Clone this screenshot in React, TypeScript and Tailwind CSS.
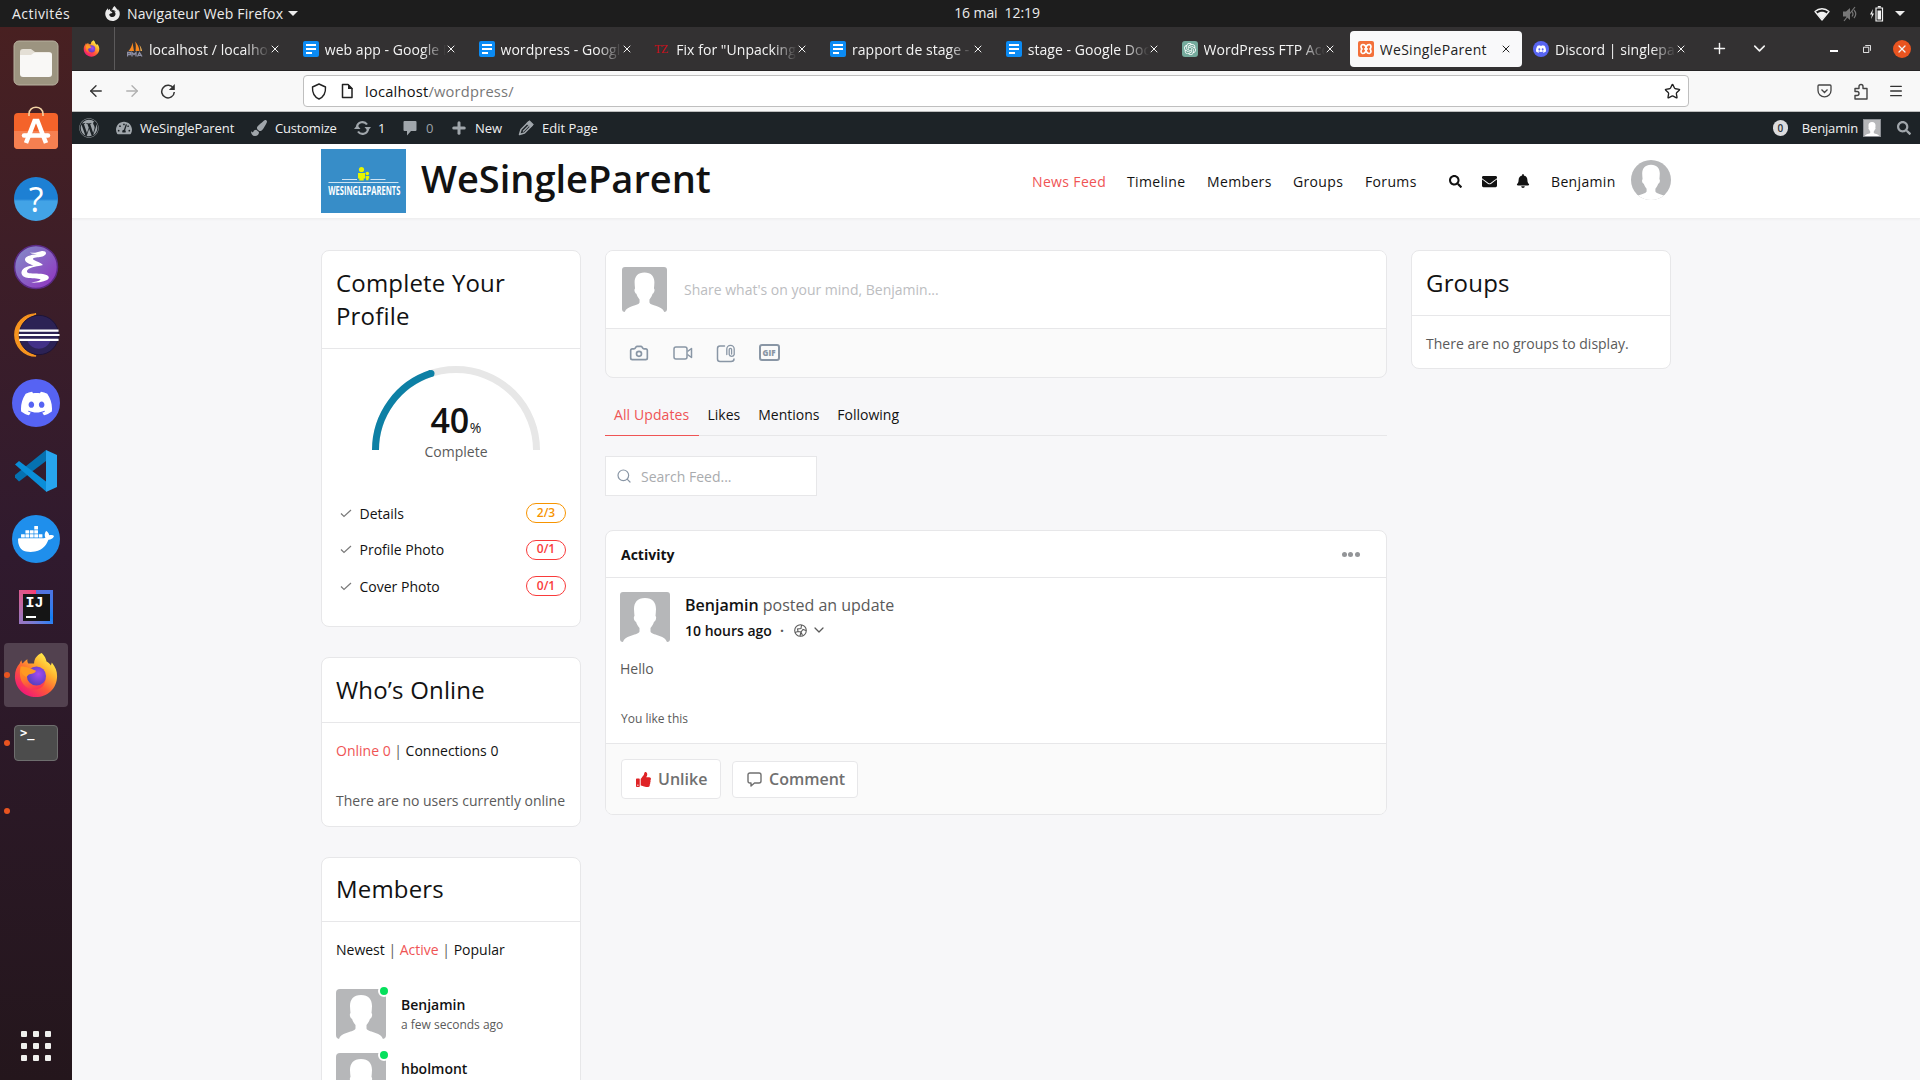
import React from "react";
import { ArrowLeft, ArrowRight, Camera, ChevronDown, Menu, Plus, Search, Star, X } from "lucide-react";
import { FaBell, FaEnvelope, FaPaintBrush, FaSearch, FaTachometerAlt, FaThumbsUp, FaWordpress } from "react-icons/fa";
import { SiDiscord, SiDocker, SiFirefoxbrowser, SiOpenai } from "react-icons/si";

function Avatar({ className }: { className: string }) {
  return (
    <svg viewBox="0 0 50 50" className={className}>
      <rect width="50" height="50" fill="#b6b7b9" />
      <path
        d="M25 6C17.500 6 14 10.500 14 17c0 2.500.3 4.500.5 7-1.400.8-.4 5.500 1.500 5.700.7 2.300 1.800 4.300 3.500 6.300v3.500C18.500 43.500 5.500 42.500 3 50h44c-2.500-7.500-15.500-6.500-16.500-10.500V36c1.700-2 2.800-4 3.500-6.300 1.900-.2 2.900-4.900 1.500-5.700.2-2.500.5-4.500.5-7C36 10.500 32.500 6 25 6Z"
        fill="#fff"
      />
    </svg>
  );
}

function FirefoxLogo({ size, id }: { size: number; id: string }) {
  return (
    <svg width={size} height={size} viewBox="0 0 46 48" className="shrink-0">
      <defs>
        <linearGradient id={id + "a"} x1=".85" y1=".1" x2=".2" y2=".95">
          <stop offset="0" stopColor="#fff44f" />
          <stop offset=".3" stopColor="#ffb02e" />
          <stop offset=".6" stopColor="#ff5a36" />
          <stop offset="1" stopColor="#f0157a" />
        </linearGradient>
        <radialGradient id={id + "b"} cx=".6" cy=".4" r=".6">
          <stop offset="0" stopColor="#a44cf0" />
          <stop offset="1" stopColor="#5b3fc0" />
        </radialGradient>
        <linearGradient id={id + "c"} x1=".2" y1="0" x2=".5" y2="1">
          <stop offset="0" stopColor="#ff9a1e" />
          <stop offset=".5" stopColor="#ff7a2a" />
          <stop offset="1" stopColor="#fb3357" />
        </linearGradient>
      </defs>
      <path
        d="M29 1c3 3 4.500 6 5 9 2 1 3.500 2.500 4.500 4l1-3c4 5 5.500 9 5.500 14C45 38 35 47 23 47S1 38 1 25.500C1 20 3 15 6 12c.3-1.500 1-2.500 2-3.500 0 1.500.5 3 1 3.500 1.500-2 3.500-3.500 5-4.500-.2 2 .2 3.500 1 4.500h6c0-5 3-9 8-11Z"
        fill={`url(#${id}a)`}
      />
      <path d="M7 15c5 0 9 1 14 4l12 8c0 8-6 13-13 12C10 38 4 28 7 15Z" fill={`url(#${id}c)`} />
      <circle cx="23.500" cy="25" r="10" fill={`url(#${id}b)`} />
      <path d="M8 15c4 1 8 1 15 4.500-1 3-5 3-7.500 4L13 26C9 24 6 20 8 15Z" fill="#ff9a22" />
    </svg>
  );
}

function DocsIcon() {
  return (
    <span className="flex h-4 w-4 shrink-0 flex-col justify-center gap-[2px] rounded-[2px] bg-[#0b8bf4] pl-[3px]">
      <span className="h-[2px] w-[10px] bg-white" />
      <span className="h-[2px] w-[10px] bg-white" />
      <span className="h-[2px] w-[6px] bg-white" />
    </span>
  );
}

function PmaIcon() {
  return (
    <svg width="16" height="16" viewBox="0 0 16 16" className="shrink-0">
      <path d="M5.500 1.500 7 10H1.500C3.500 8 5 5 5.500 1.500Z" fill="#f6871f" />
      <path d="M8 .5C10.500 3 12 6 12.500 10H8.500C9 6 9 3 8 .5Z" fill="#f6871f" />
      <path d="M12.500 4c1.500 2 2.300 4 2.500 6h-1.500c0-2-.3-4-1-6Z" fill="#f7b65b" />
      <path d="M.5 15.500V11.500h3v2h-3M5 15.500v-4l2 2 2-2v4M10.500 15.500l2-4 2.500 4M11.500 14.300h2.500" fill="none" stroke="#8d8fa5" strokeWidth="1.300" />
    </svg>
  );
}

const tabs = [
  { label: "localhost / localhost", icon: <PmaIcon /> },
  { label: "web app - Google Docs", icon: <DocsIcon /> },
  { label: "wordpress - Google D", icon: <DocsIcon /> },
  {
    label: 'Fix for "Unpacking th',
    icon: <span className="flex h-4 w-4 shrink-0 items-center font-['Liberation_Serif'] text-[12px] tracking-[-0.5px] text-[#c8101c]">TZ</span>,
  },
  { label: "rapport de stage - G", icon: <DocsIcon /> },
  { label: "stage - Google Docs", icon: <DocsIcon /> },
  {
    label: "WordPress FTP Access",
    icon: (
      <span className="flex h-4 w-4 shrink-0 items-center justify-center rounded-[3px] bg-[#74aa9c] text-[12px] text-white">
        <SiOpenai />
      </span>
    ),
  },
  {
    label: "WeSingleParent",
    active: true,
    icon: (
      <span className="flex h-4 w-4 shrink-0 items-center justify-center rounded-[2px] bg-[#f3703a]">
        <svg width="12" height="12" viewBox="0 0 12 12">
          <path d="M2.500 1.500q3.500 0 3.500 4.500t3.500 4.500q1.500-.3 1.500-2.300T9.500 6Q11 5.600 11 3.800T9.500 1.500Q6 1.500 6 6t-3.500 4.500Q1 10.200 1 8.200T2.500 6Q1 5.600 1 3.800T2.500 1.500M4 6h4" fill="none" stroke="#fff" strokeWidth="1.700" />
        </svg>
      </span>
    ),
  },
  {
    label: "Discord | singleparent",
    icon: (
      <span className="flex h-4 w-4 shrink-0 items-center justify-center rounded-full bg-[#5865f2] text-[10px] text-white">
        <SiDiscord />
      </span>
    ),
  },
];

function TopBar() {
  return (
    <div className="grid h-[27px] shrink-0 grid-cols-[1fr_auto_1fr] items-center bg-[#1d1d1d] text-[14px] leading-[27px] text-[#ececec]">
      <div className="flex items-center">
        <span className="ml-3 w-[93px] tracking-[0.45px]">Activités</span>
        <SiFirefoxbrowser className="mr-[7px] text-[15px]" />
        <span className="tracking-[0.15px]">Navigateur Web Firefox</span>
        <span className="ml-[5px] border-x-[5px] border-t-[5px] border-x-transparent border-t-[#ececec]" />
      </div>
      <div className="-translate-y-px whitespace-pre pl-[74px] tracking-[-0.1px]">16 mai  12:19</div>
      <div className="flex items-center justify-end pr-[15px]">
        <svg width="16" height="14" viewBox="0 0 16 14" className="mr-[12px]">
          <path d="M1 4.500C5 .8 11 .8 15 4.500L8 13Z" fill="none" stroke="#f2f2f2" strokeWidth="1.300" strokeLinejoin="round" />
          <path d="M3.200 6.500C6 4 10 4 12.800 6.500L8 12.500Z" fill="#f2f2f2" />
        </svg>
        <svg width="16" height="16" viewBox="0 0 16 16" className="mr-[11px]">
          <path d="M1 5.500h3L8 2v12L4 10.500H1Z" fill="#777" />
          <path d="M10 5.500q2 2.500 0 5M12 4q3.500 4 0 8M2 15 13 1" fill="none" stroke="#777" strokeWidth="1.200" />
        </svg>
        <svg width="15" height="16" viewBox="0 0 15 16" className="mr-[11px]">
          <path d="M4 3 1 8.500h2L2 13l3-5.500H3.200Z" fill="#f2f2f2" />
          <path d="M7 2h6.500v13H7Z" fill="none" stroke="#f2f2f2" strokeWidth="1.200" />
          <path d="M8.500 4.500H12v9H8.500ZM8.800 0h3v1.500h-3Z" fill="#f2f2f2" />
        </svg>
        <span className="border-x-[5px] border-t-[5px] border-x-transparent border-t-[#ececec]" />
      </div>
    </div>
  );
}

function DockCell({ children, running, active }: { children?: React.ReactNode; running?: boolean; active?: boolean }) {
  return (
    <div className="flex h-[68px] items-center">
      <div className={active ? "relative ml-1 flex h-16 w-16 items-center justify-center rounded-[4px] bg-[#52414f]" : "relative ml-1 flex h-16 w-16 items-center justify-center"}>
        {running && <span className="absolute left-0 top-[29px] h-[6px] w-[6px] rounded-full bg-[#e95420]" />}
        {children}
      </div>
    </div>
  );
}

function Dock() {
  return (
    <div className="flex w-[72px] shrink-0 flex-col bg-linear-to-b from-[#482021] via-[#301a2e] to-[#24161c] pt-[2px]">
      <DockCell>
        <svg width="46" height="46" viewBox="0 0 46 46">
          <rect x="1" y="1" width="44" height="44" rx="5" fill="#9c9480" stroke="#b8b19f" />
          <path d="M7 12a3 3 0 0 1 3-3h8l4 3h14a3 3 0 0 1 3 3v10H7Z" fill="#e4dfd5" />
          <rect x="7" y="12.500" width="32" height="24.500" rx="3" fill="#f9f8f6" />
          <path d="M7 15V12h15l-4 3Z" fill="#e4dfd5" />
        </svg>
      </DockCell>
      <DockCell>
        <svg width="46" height="46" viewBox="0 0 46 46" className="-translate-y-[3px]">
          <rect x="1" y="8" width="44" height="36" rx="4" fill="#f4632a" />
          <path d="M1 26h44v14a4 4 0 0 1-4 4H5a4 4 0 0 1-4-4Z" fill="#f58051" />
          <path d="M16 11V9c0-9 14-9 14 0v2" fill="none" stroke="#f3d3a4" strokeWidth="1.600" />
          <path d="M13 38 21.500 16h3L33 38" fill="none" stroke="#fff" strokeWidth="4.500" />
          <path d="M11 30.500h24" stroke="#fff" strokeWidth="4.500" strokeLinecap="round" />
        </svg>
      </DockCell>
      <DockCell>
        <div className="flex h-11 w-11 items-center justify-center rounded-full bg-linear-to-b from-[#1d80d4] from-50% to-[#42a3e6] to-55% font-['Open_Sans'] text-[34px] leading-none text-white">?</div>
      </DockCell>
      <DockCell>
        <svg width="46" height="46" viewBox="0 0 46 46">
          <defs>
            <linearGradient id="em" x1="0" y1="0" x2="1" y2="1">
              <stop offset="0" stopColor="#8290c8" />
              <stop offset="1" stopColor="#9030c0" />
            </linearGradient>
          </defs>
          <circle cx="23" cy="23" r="21.500" fill="url(#em)" stroke="#5b2a86" strokeWidth="1.500" />
          <path d="M17 8.500c5 1 7-.5 11-1.300 4-.7 6 1.300 4.500 3.300-2 2.500-6 2.500-9.500 3-3 .5-4 1.500-2 2.500 3 1.700 7 2.500 9 5-5 1.500-12 1.500-15.500 5-1.500 2 0 3 3 3.300 5 .5 12 0 16 1.700 3 1.300 3 3.500.5 5-4 2.200-10 2.700-16 2.700 4-1 8-1.500 9.500-3 0-1.500-7-1-12-1.700-4-.5-7.500-2.500-7-6 .8-4.500 7-6 12-6.500-4-1.500-8.500-3-8.500-6s5-4.500 12-5.500c-3-.2-5 .3-7-1.500Z" fill="#fff" />
        </svg>
      </DockCell>
      <DockCell>
        <svg width="48" height="46" viewBox="0 0 50 46" className="shrink-0">
          <path d="M25 1A22 22 0 0 0 25 45 24 24 0 0 1 25 1Z" fill="#f7941e" stroke="#f7941e" strokeWidth="1.500" />
          <circle cx="28" cy="23" r="20.500" fill="#2c2255" stroke="#1c1438" />
          <path d="M16 29h24c-4 11-20 11-24 0Z" fill="#423188" />
          <path d="M7.500 18.500h41M7 23h42.500M7.500 28h41" stroke="#fff" strokeWidth="2.300" />
        </svg>
      </DockCell>
      <DockCell>
        <div className="flex h-12 w-12 items-center justify-center rounded-full bg-[#5663f3]"><SiDiscord className="text-[31px] text-white" /></div>
      </DockCell>
      <DockCell>
        <svg width="42" height="42" viewBox="0 0 42 42">
          <path d="M0 27.500 4 31.500 31 11V0L0 25Z" fill="#0671b0" />
          <path d="M0 14.500 4 11 31 31.500v10Z" fill="#0a8ed8" />
          <path d="M31 0 42 5v32l-11 5Z" fill="#27a5ee" />
        </svg>
      </DockCell>
      <DockCell>
        <div className="flex h-12 w-12 items-center justify-center rounded-full bg-[#1f8fec]"><SiDocker className="text-[36px] text-white" /></div>
      </DockCell>
      <DockCell>
        <div className="flex h-[34px] w-[34px] items-center justify-center bg-conic from-[#5b6fd8] via-[#0f80f5] via-35% to-[#f83a72]">
          <div className="flex h-[27px] w-[27px] flex-col justify-between bg-[#151515] px-[3px] pb-[3px] pt-[2px] font-['Liberation_Mono'] text-[15px] font-bold leading-[15px] text-white">
            IJ
            <span className="h-[2px] w-[10px] bg-white" />
          </div>
        </div>
      </DockCell>
      <DockCell running active><FirefoxLogo size={46} id="dock" /></DockCell>
      <DockCell running>
        <div className="h-9 w-11 rounded-[4px] border border-[#6e6e6e] bg-[#4c4c4c] pl-[5px] font-['DejaVu_Sans_Mono'] text-[12px] font-bold leading-[15px] text-white">&gt;_</div>
      </DockCell>
      <DockCell running />
      <div className="mt-auto mb-[19px] grid grid-cols-[6px_6px_6px] justify-center gap-[6px]">
        {Array.from({ length: 9 }, (_, i) => (
          <span key={i} className="h-[6px] w-[6px] rounded-[1px] bg-[#f0f0ee]" />
        ))}
      </div>
    </div>
  );
}

function TabBar() {
  return (
    <div className="flex h-[44px] shrink-0 items-center border-b border-[#252324] bg-[#333132] text-[14px] text-[#f4f4f4]">
      <div className="flex h-full w-[43px] items-center border-r border-[#5c5a5b] pl-[11px]"><FirefoxLogo size={17} id="tab" /></div>
      <div className="flex pl-[3px] pt-px">
        {tabs.map((t) => (
          <div key={t.label} className={t.active ? "flex h-9 w-[175.75px] shrink-0 items-center pl-[1.500px] pr-[3px] text-[#222]" : "flex h-9 w-[175.75px] shrink-0 items-center"}>
            <div className={t.active ? "flex h-full flex-1 items-center rounded-[4px] bg-[#f9f9fa] pl-[8px] pr-[10px]" : "flex h-full flex-1 items-center pl-[9px] pr-[14px]"}>
              {t.icon}
              <div className={t.active ? "ml-[6px] w-[121px] overflow-hidden whitespace-nowrap tracking-[0.3px]" : "ml-[6px] w-[121px] overflow-hidden whitespace-nowrap mask-r-from-80% mask-r-to-100% tracking-[0.05px]"}>{t.label}</div>
              <X className="-ml-px h-[12px] w-[12px] shrink-0" strokeWidth={2} />
            </div>
          </div>
        ))}
      </div>
      <Plus className="ml-[11px] h-[17px] w-[17px]" strokeWidth={2} />
      <ChevronDown className="ml-[22px] h-[19px] w-[19px]" strokeWidth={2} />
      <span className="ml-auto mt-[5px] h-[2px] w-2 bg-white" />
      <svg width="8" height="8" viewBox="0 0 9 9" className="ml-[25px]">
        <path d="M.5 2.500h6v6h-6ZM2.500 .5h6v6" fill="none" stroke="#fff" />
      </svg>
      <span className="ml-[22px] mr-[9px] flex h-[18px] w-[18px] items-center justify-center rounded-full bg-[#e95420]"><X className="h-3 w-3" strokeWidth={2.500} /></span>
    </div>
  );
}

function NavBar() {
  return (
    <div className="flex h-[41px] shrink-0 items-center border-b border-[#bdbdbd] bg-[#f8f8f8] text-[#333]">
      <ArrowLeft className="ml-[15px] h-[18px] w-[18px]" strokeWidth={1.800} />
      <ArrowRight className="ml-[18px] h-[18px] w-[18px] text-[#b0b0b0]" strokeWidth={1.800} />
      <svg width="16" height="16" viewBox="0 0 16 16" className="ml-[19px]">
        <path d="M13.500 5.500A6.300 6.300 0 1 0 14.300 9" fill="none" stroke="#333" strokeWidth="1.500" />
        <path d="M14.800 1v6h-6Z" fill="#333" />
      </svg>
      <div className="ml-[127px] flex h-8 w-[1386px] items-center rounded-[4px] border border-[#bfbfbf] bg-white">
        <svg width="16" height="17" viewBox="0 0 16 17" className="ml-[7px]">
          <path d="M8 1 14.500 4c.3 5-2 10-6.500 12C3.500 14 1.200 9 1.500 4Z" fill="none" stroke="#222" strokeWidth="1.400" strokeLinejoin="round" />
        </svg>
        <svg width="14" height="16" viewBox="0 0 14 16" className="ml-[13px]">
          <path d="M2.500 1.500H8L12 5.500v9H2.500Z" fill="none" stroke="#222" strokeWidth="1.500" strokeLinejoin="round" />
          <path d="M8 1v5h5Z" fill="#222" />
        </svg>
        <span className="ml-[11px] text-[14.670px] tracking-[0.22px] text-[#111]">localhost<span className="text-[#777]">/wordpress/</span></span>
        <Star className="ml-auto mr-[7px] h-[17px] w-[17px] text-[#222]" strokeWidth={1.900} />
      </div>
      <svg width="15" height="14" viewBox="0 0 15 14" className="ml-auto">
        <path d="M2 1h11q1 0 1 1v4.500a6.500 6.300 0 0 1-13 0V2q0-1 1-1ZM4.500 5.500l3 3 3-3" fill="none" stroke="#444" strokeWidth="1.300" />
      </svg>
      <svg width="16" height="17" viewBox="0 0 16 17" className="ml-[21px]">
        <path d="M2 5.500h4V3.500a2 2 0 0 1 4 0v2h4V16H2v-3.500h2a2 2 0 0 0 0-4H2Z" fill="none" stroke="#444" strokeWidth="1.400" strokeLinejoin="round" />
      </svg>
      <Menu className="ml-[19px] mr-[16px] h-4 w-4" strokeWidth={2} />
    </div>
  );
}

function AdminBar() {
  return (
    <div className="flex h-8 shrink-0 items-center bg-[#1d2327] text-[13px] leading-8 text-[#f0f0f1]">
      <FaWordpress className="ml-[7px] text-[20px] text-[#a0a6ab]" />
      <FaTachometerAlt className="ml-[17px] mr-2 text-[16px] text-[#a0a6ab]" />
      <span className="w-[111px] tracking-[-0.1px]">WeSingleParent</span>
      <FaPaintBrush className="mr-2 text-[16px] text-[#a0a6ab]" />
      <span className="w-[79px] tracking-[-0.2px]">Customize</span>
      <svg width="17" height="16" viewBox="0 0 17 16" className="mr-[7px]">
        <path d="M3 7a5.500 5.500 0 0 1 10-2.500M14 9a5.500 5.500 0 0 1-10 2.500" fill="none" stroke="#a0a6ab" strokeWidth="2.200" />
        <path d="M10.500 7h6.500l-3.200 4ZM0 9h6.500L3.200 5Z" fill="#a0a6ab" />
      </svg>
      <span className="w-[25px]">1</span>
      <svg width="14" height="16" viewBox="0 0 14 16" className="mr-[9px]"><path d="M1.500 1h11q1 0 1 1v8q0 1-1 1H8l-4 4.500V11H1.500q-1 0-1-1V2q0-1 1-1Z" fill="#a0a6ab" /></svg>
      <span className="w-6 text-[#9ca2a7]">0</span>
      <Plus className="mr-[7px] h-[18px] w-[18px] text-[#a0a6ab]" strokeWidth={4} />
      <span className="w-[43px]">New</span>
      <svg width="16" height="16" viewBox="0 0 16 16" className="mr-2">
        <path d="M1.500 14.500 3 9.500 10.500 2l3.500 3.500L6.500 13Z" fill="none" stroke="#a0a6ab" strokeWidth="1.500" strokeLinejoin="round" />
        <path d="M9 3.500 11.500 1 15 4.500 12.500 7ZM5 11.500 10.500 6" fill="#a0a6ab" stroke="#a0a6ab" strokeWidth="1.200" />
      </svg>
      <span>Edit Page</span>
      <span className="ml-auto flex h-4 w-[15px] items-center justify-center rounded-full bg-[#dcdcde] text-[10px] font-semibold leading-none text-[#2c3338]">0</span>
      <span className="ml-[14px] mr-[5px] tracking-[-0.15px]">Benjamin</span>
      <Avatar className="h-[18px] w-[18px] border border-[#8c8f94]" />
      <FaSearch className="ml-[16px] mr-[9px] text-[14px] text-[#a0a6ab]" />
    </div>
  );
}

function SiteHeader() {
  return (
    <div className="flex h-[75px] shrink-0 items-center border-b border-[#efeff0] bg-white pl-[249px] text-[14px] font-medium text-[#121212] shadow-[0_1px_2px_rgba(0,0,0,0.03)]">
      <svg width="85" height="64" viewBox="0 0 85 64" className="shrink-0">
        <rect width="85" height="64" fill="#378dc8" />
        <circle cx="40.500" cy="20.500" r="2.600" fill="#e6f500" />
        <path d="M37 24h7v5.500h-1.300v2h-4.400v-2H37Z" fill="#e6f500" />
        <circle cx="46.300" cy="24.500" r="1.800" fill="#e6f500" />
        <path d="M44.600 27h3.600v2.500h-.8v1.800h-2.200v-1.800h-.6Z" fill="#e6f500" />
        <path d="M21 30.500h15M49.500 30.500h15M7.500 33.500h70" stroke="#cfe4f3" />
        <text transform="translate(7.300 45.800) scale(.59 1)" fontFamily="Open Sans" fontSize="12.800" fontWeight="700" fill="#fff">WESINGLEPARENTS</text>
      </svg>
      <span className="mb-[6px] ml-[15px] w-[611px] text-[38px] font-semibold leading-[52px]">WeSingleParent</span>
      <div className="flex flex-1 items-center tracking-[0.35px]">
        <span className="w-[95px] text-[#ef5455]">News Feed</span>
        <span className="w-[80px]">Timeline</span>
        <span className="w-[86px]">Members</span>
        <span className="w-[72px]">Groups</span>
        <span className="w-[84px]">Forums</span>
        <FaSearch className="mr-[19.500px] text-[13px]" />
        <FaEnvelope className="mr-[19.500px] text-[15px]" />
        <FaBell className="mr-[21px] text-[14px]" />
        <span className="w-[80px]">Benjamin</span>
        <Avatar className="mb-0.5 h-10 w-10 rounded-full" />
      </div>
    </div>
  );
}

function Widget({ title, className, headClass, children }: { title: string; className: string; headClass: string; children: React.ReactNode }) {
  return (
    <section className={"w-[260px] rounded-[8px] border border-[#e7e7e9] bg-white " + className}>
      <h2 className={"-mx-px border-b border-[#e7e7e9] px-[15px] text-[24px] tracking-[0.18px] text-[#121212] " + headClass}>{title}</h2>
      {children}
    </section>
  );
}

const steps = [
  { name: "Details", count: "2/3", badge: "border-[#f79400] text-[#f79400]" },
  { name: "Profile Photo", count: "0/1", badge: "border-[#f93b3b] text-[#f93b3b]" },
  { name: "Cover Photo", count: "0/1", badge: "border-[#f93b3b] text-[#f93b3b]" },
];

function LeftColumn() {
  return (
    <div className="flex w-[260px] shrink-0 flex-col gap-[30px]">
      <Widget title="Complete Your Profile" className="h-[377px]" headClass="pb-[16px] pt-[15px] leading-[33px]">
        <div className="flex flex-col items-center px-[14px] pt-[17px]">
          <div className="relative -mr-[9px] h-[84px] w-[168px]">
            <svg width="168" height="84" viewBox="0 0 168 84">
              <path d="M3.500 84A80.500 80.500 0 0 1 164.500 84" fill="none" stroke="#e7e7e7" strokeWidth="7" />
              <path d="M3.500 84A80.500 80.500 0 0 1 59 7.450" fill="none" stroke="#0d80a5" strokeWidth="7" />
              <circle cx="59" cy="7.450" r="3.500" fill="#0d80a5" />
            </svg>
            <div className="absolute inset-x-0 top-[33px] pl-px text-center text-[34px] font-semibold leading-[42px] tracking-[-0.3px] text-[#121212]">
              40<span className="ml-px text-[14px] font-medium tracking-normal">%</span>
            </div>
            <div className="absolute inset-x-0 top-[76px] pl-px text-center text-[14px] leading-5 text-[#5a5a5a]">Complete</div>
          </div>
          <div className="mt-[45px] flex w-full flex-col">
            {steps.map((s) => (
              <div key={s.name} className="flex h-[36.500px] items-center text-[14px] text-[#121212]">
                <svg width="12" height="9" viewBox="0 0 12 9" className="ml-1 mr-[7.500px]">
                  <path d="M1 4.500 4 7.500 11 1" fill="none" stroke="#7a7a7a" strokeWidth="1.200" />
                </svg>
                <span className="flex-1">{s.name}</span>
                <span className={"flex h-5 w-10 items-center justify-center rounded-full border pb-px text-[12px] font-semibold " + s.badge}>{s.count}</span>
              </div>
            ))}
          </div>
        </div>
      </Widget>
      <Widget title="Who’s Online" className="h-[170px]" headClass="pb-[15.600px] pt-[15px] leading-[33.600px]">
        <div className="px-[14px] pt-[17.800px] text-[14px] leading-5 text-[#5a5a5a]">
          <p><span className="text-[#ef5455]">Online 0</span> | <span className="text-[#121212]">Connections 0</span></p>
          <p className="mt-[30px] whitespace-nowrap">There are no users currently online</p>
        </div>
      </Widget>
      <Widget title="Members" className="h-[260px]" headClass="pb-[16px] pt-[14px] leading-[33px]">
        <div className="px-[14px] pt-[18px] text-[14px] leading-5 text-[#5a5a5a]">
          <p className="mb-[29px] text-[#121212]">Newest <span className="text-[#5a5a5a]">|</span> <span className="text-[#ef5455]">Active</span> <span className="text-[#5a5a5a]">|</span> Popular</p>
          {[["Benjamin", "a few seconds ago"], ["hbolmont", "14 minutes ago"]].map(([name, seen]) => (
            <div key={name} className="relative mb-[14px] flex h-[50px]">
              <Avatar className="h-[50px] w-[50px] rounded-[4px]" />
              <span className="absolute -top-1 left-[42px] h-3 w-3 rounded-full border-2 border-white bg-[#05e05c]" />
              <div className="ml-[15px] pt-[6px]">
                <p className="font-semibold text-[#121212]">{name}</p>
                <p className="text-[12px] leading-[19px]">{seen}</p>
              </div>
            </div>
          ))}
        </div>
      </Widget>
    </div>
  );
}

function Feed() {
  return (
    <main className="w-[782px] shrink-0 text-[14px] text-[#5a5a5a]">
      <section className="h-[128px] overflow-hidden rounded-[8px] border border-[#e7e7e9] bg-[#fafafa]">
        <div className="flex h-[78px] items-center border-b border-[#e7e7e9] bg-white pl-4">
          <Avatar className="h-[45px] w-[45px] rounded-[3px]" />
          <span className="ml-[17px] text-[#bcbdbf]">Share what's on your mind, Benjamin...</span>
        </div>
        <div className="flex h-[48px] items-center pl-[23px] text-[#8996a5]">
          <Camera className="h-5 w-5" strokeWidth={2} />
          <svg width="20" height="16" viewBox="0 0 20 16" className="ml-[23.500px]" fill="none" stroke="currentColor" strokeWidth="1.500" strokeLinejoin="round">
            <rect x="1" y="2" width="13" height="12" rx="2" />
            <path d="M14.500 6.500 18.500 3.500V12.500L14.500 9.500" />
          </svg>
          <svg width="20" height="19" viewBox="0 0 20 19" className="ml-[23.500px]" fill="none" stroke="currentColor" strokeWidth="1.500" strokeLinecap="round">
            <path d="M8.500 2H4Q1.500 2 1.500 4.500v10.500q0 2.500 2.500 2.500h11q3 0 3-2.500" />
            <path d="M10.800 10.500V5a3.700 3.700 0 0 1 7.400 0v5.500a2.600 2.600 0 0 1-5 0V5.500a1.200 1.200 0 0 1 2.400 0V10" strokeWidth="1.300" />
          </svg>
          <span className="mb-px ml-[22.500px] flex h-[17px] w-[21px] items-center justify-center rounded-[3px] border-2 border-current text-[8px] font-extrabold leading-none">GIF</span>
        </div>
      </section>
      <div className="mt-[21px] flex h-[37px] border-b border-[#e7e7e9] leading-[32px] text-[#121212]">
        <span className="h-[37px] w-[94px] border-b border-[#ef5455] pl-[9px] tracking-[0.1px] text-[#ef5455]">All Updates</span>
        <span className="ml-[8.500px]">Likes</span>
        <span className="ml-[18px]">Mentions</span>
        <span className="ml-[17.800px]">Following</span>
      </div>
      <div className="mt-5 flex h-10 w-[212px] items-center border border-[#e7e7e9] bg-white pl-[10px] text-[#a9abae]">
        <Search className="h-4 w-4 text-[#8996a5]" strokeWidth={1.800} />
        <span className="ml-[9px]">Search Feed...</span>
      </div>
      <section className="mt-[34px] h-[285px] overflow-hidden rounded-[8px] border border-[#e7e7e9] bg-white">
        <div className="flex h-[47px] items-center justify-between border-b border-[#e7e7e9] pl-[15px] pr-[26.500px]">
          <h3 className="font-bold text-[#121212]">Activity</h3>
          <span className="flex gap-[1.500px]">
            <span className="h-[5px] w-[5px] rounded-full bg-[#939598]" />
            <span className="h-[5px] w-[5px] rounded-full bg-[#939598]" />
            <span className="h-[5px] w-[5px] rounded-full bg-[#939598]" />
          </span>
        </div>
        <div className="h-[166px] border-b border-[#e7e7e9] px-[14px] pt-[14px]">
          <div className="flex">
            <Avatar className="h-[50px] w-[50px] rounded-[3px]" />
            <div className="ml-[15px]">
              <p className="mt-px text-[16px] leading-6"><b className="font-semibold text-[#121212]">Benjamin</b> posted an update</p>
              <p className="flex items-center leading-[28px]">
                <b className="font-semibold text-[#121212]">10 hours ago</b>
                <span className="ml-[8px] w-[14px] font-bold">·</span>
                <svg width="13" height="13" viewBox="0 0 13 13" fill="none" stroke="#5a5a5a" strokeWidth="1.100" className="-mt-0.5">
                  <circle cx="6.500" cy="6.500" r="5.800" />
                  <path d="M1 8.500 4 7.500 3.500 5 7 4.500 7.500 1M4 7.500 7 8 6 12M12 6.500 9 5.500 7 8 8.500 11.500" />
                </svg>
                <ChevronDown className="-mt-0.5 ml-[4px] h-4 w-4" strokeWidth={1.900} />
              </p>
            </div>
          </div>
          <p className="mt-[14px] leading-5">Hello</p>
          <p className="mt-[31px] pl-px text-[12px] leading-[18px]">You like this</p>
        </div>
        <div className="flex h-[70px] items-center bg-[#fafafa] pl-[15px] text-[16px] font-semibold text-[#707070]">
          <button className="flex h-[40px] w-[100px] items-center rounded-[4px] border border-[#e7e7e9] bg-white pl-[14px]">
            <FaThumbsUp className="mr-[7px] text-[15px] text-[#df2326]" />
            Unlike
          </button>
          <button className="ml-[11px] flex h-[37px] w-[126px] items-center rounded-[4px] border border-[#e7e7e9] bg-white pl-[14px]">
            <svg width="15" height="15" viewBox="0 0 15 15" className="mr-[7px]">
              <path d="M3 1h9q2 0 2 2v6q0 2-2 2H7.500L4 14V11H3Q1 11 1 9V3Q1 1 3 1Z" fill="none" stroke="#707070" strokeWidth="1.400" strokeLinejoin="round" />
            </svg>
            Comment
          </button>
        </div>
      </section>
    </main>
  );
}

export default function App() {
  return (
    <div className="flex h-[1080px] w-[1920px] flex-col overflow-hidden bg-[#f7f7f9] font-['Open_Sans',sans-serif]">
      <TopBar />
      <div className="flex min-h-0 flex-1">
        <Dock />
        <div className="flex min-w-0 flex-1 flex-col">
          <TabBar />
          <NavBar />
          <AdminBar />
          <SiteHeader />
          <div className="flex min-h-0 flex-1 items-start pl-[249px] pt-[31px]">
            <LeftColumn />
            <div className="mx-6"><Feed /></div>
            <Widget title="Groups" className="h-[119px]" headClass="pb-[15.600px] pt-[15px] leading-[33.600px]">
              <p className="px-[14px] pt-[18px] text-[14px] leading-5 text-[#5a5a5a]">There are no groups to display.</p>
            </Widget>
          </div>
        </div>
      </div>
    </div>
  );
}
